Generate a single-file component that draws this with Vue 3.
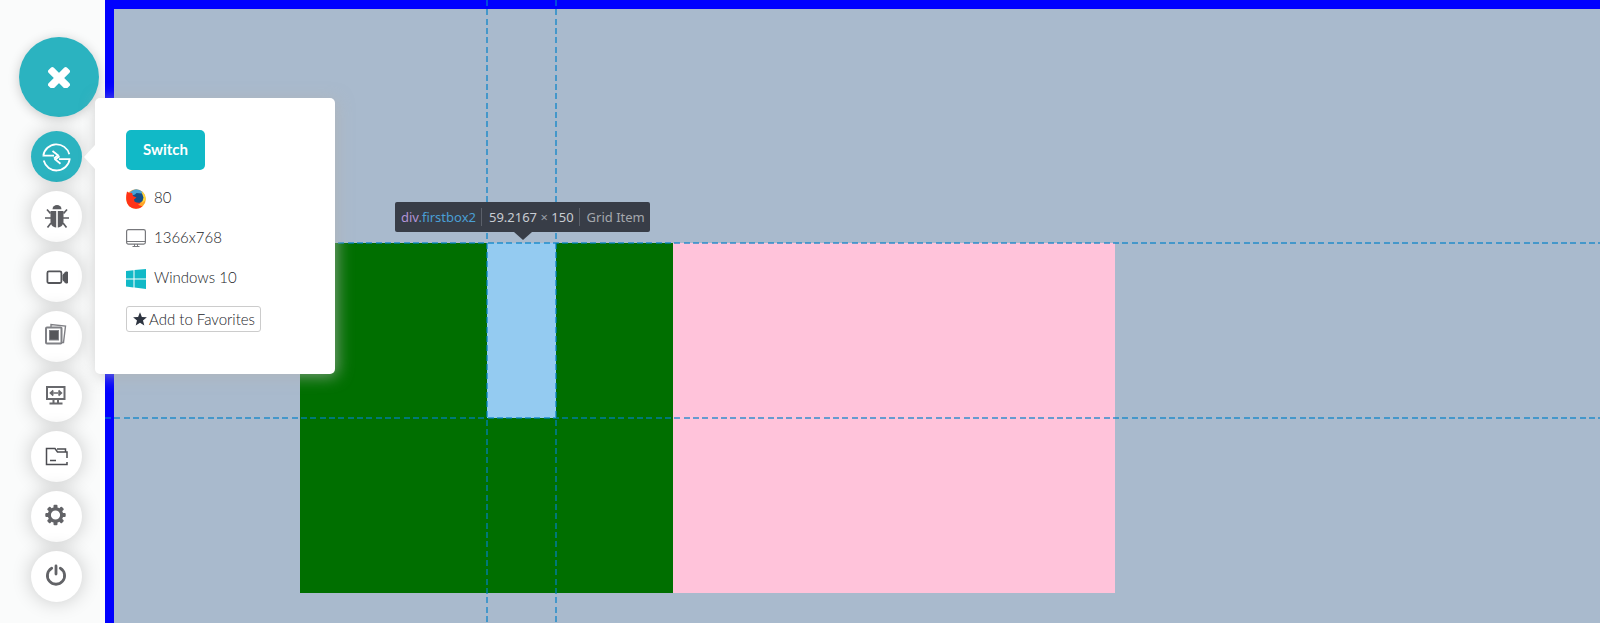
<script setup>
const tools = [
  { id: 'switch', label: 'Switch browser' },
  { id: 'bug', label: 'Report a bug' },
  { id: 'video', label: 'Record video' },
  { id: 'gallery', label: 'Gallery' },
  { id: 'resolution', label: 'Change resolution' },
  { id: 'files', label: 'Files' },
  { id: 'settings', label: 'Settings' },
  { id: 'power', label: 'End session' },
]
const teeth = [0, 45, 90, 135, 180, 225, 270, 315]
</script>

<template>
  <div class="session">
    <aside class="sidebar">
      <button class="close" aria-label="Close toolbar">
        <svg viewBox="0 0 22 22" width="22" height="22">
          <g fill="#fff" transform="translate(11 12)">
            <rect x="-13" y="-3.600" width="26" height="7.200" rx="1.800" transform="rotate(45)" />
            <rect x="-13" y="-3.600" width="26" height="7.200" rx="1.800" transform="rotate(-45)" />
          </g>
        </svg>
      </button>
      <nav class="tools" aria-label="Session tools">
        <button
          v-for="tool in tools"
          :key="tool.id"
          class="tool"
          :class="{ active: tool.id === 'switch' }"
          :aria-label="tool.label"
        >
          <svg v-if="tool.id === 'switch'" viewBox="0 0 30 30" width="30" height="30" fill="none" stroke="#fff" stroke-width="1.800">
            <path d="M.5 13.600H12M1.300 13.600A13.300 13.300 0 0 1 27.300 12.200" />
            <path d="M28.500 17.200H17M27.700 17.200A13.300 13.300 0 0 1 1.700 18.600" />
            <path d="M10.500 9 16 13.300 12 16.500" />
            <path d="M18.500 21.800 13.300 17.500 17.500 14.300" />
          </svg>
          <svg v-else-if="tool.id === 'bug'" viewBox="0 0 24 24" width="24" height="24" fill="#5c5d61">
            <path d="M7.500 4.200a4.500 4.200 0 0 1 9 0z" />
            <path d="M5.500 6H11v16.500C7.500 22 5.500 19.500 5.500 16zM13 6h5.500v10c0 3.500-2 6-5.500 6.500z" />
            <path d="M5.500 8.500 2 4.500M18.500 8.500 22 4.500M6 13H0M18 13h6M6 18 2.500 22.500M18 18 21.500 22.500" stroke="#5c5d61" stroke-width="1.700" />
            <path d="M12 6v16.500" stroke="#bbb" stroke-width="1" />
          </svg>
          <svg v-else-if="tool.id === 'video'" viewBox="0 0 24 24" width="24" height="24" fill="none" stroke="#55565a">
            <rect x="2.400" y="6.400" width="14" height="11.600" rx="1.500" stroke-width="1.800" />
            <path d="M18 10 20.500 7h2v11h-2L18 15z" fill="#55565a" />
          </svg>
          <svg v-else-if="tool.id === 'gallery'" class="raised" viewBox="0 0 24 24" width="24" height="24" fill="none" stroke="#808186">
            <path d="M6 4V1.500L20.500 3 18.500 19.500H17M16.500 4.500l-1.500 14" stroke-width="1.400" />
            <rect x="1" y="4.500" width="15.500" height="16" rx="1" fill="#fff" stroke-width="2" />
            <rect x="4.500" y="7.500" width="9" height="9.500" fill="#55565a" />
          </svg>
          <svg v-else-if="tool.id === 'resolution'" class="raised" viewBox="0 0 24 24" width="24" height="24" fill="none" stroke="#68696d">
            <rect x="2" y="4" width="17.500" height="12" stroke-width="2" />
            <path d="M6 10h10M8.300 7.500 5.500 10l2.800 2.500M13.500 7.500 16.300 10l-2.800 2.500" stroke-width="1.700" />
            <path d="M8.500 17v3M13 17v3M4.500 20.500h13" stroke-width="2" />
          </svg>
          <svg v-else-if="tool.id === 'files'" viewBox="0 0 24 24" width="24" height="24" fill="none" stroke="#4c4d52" stroke-width="1.500">
            <path d="M22 17v2.500H1.500V3.500H10L12.500 7H22v6" />
            <path d="M12 4h8.500v3M5 15.500h6" />
          </svg>
          <svg v-else-if="tool.id === 'settings'" class="raised" viewBox="0 0 24 24" width="24" height="24">
            <g fill="#626367">
              <rect v-for="a in teeth" :key="a" x="8.500" y="1.800" width="4" height="5" rx="1" :transform="`rotate(${a} 10.500 12)`" />
            </g>
            <circle cx="10.500" cy="12" r="6.200" fill="none" stroke="#626367" stroke-width="3.200" />
          </svg>
          <svg v-else class="raised" viewBox="0 0 24 24" width="24" height="24" fill="none" stroke="#626367" stroke-width="2.800" stroke-linecap="round">
            <path d="M6.700 5.200a8.600 8.600 0 1 0 8.600 0M11 3v8" />
          </svg>
        </button>
      </nav>

      <section class="popup" aria-label="Current environment">
        <button class="switch">Switch</button>
        <ul class="facts">
          <li>
            <svg viewBox="0 0 20 20" width="20" height="20">
              <circle cx="10" cy="10" r="9.800" fill="#ffa42a" />
              <path d="M3.500 4Q10-3 16.500 3L17 10H5z" fill="#4aa3d8" />
              <path d="M15.500 2.500Q20 6 19.700 11L16 14q1.500-6-.5-11.500" fill="#ffd93b" />
              <path d="M6 6.500 9 5.500 10.500 4 16 4.500 17.500 8.500 16.500 12 12.500 15 7 14 6 11z" fill="#174f86" />
              <path d="M1 2.500 3.500 4 6 3.700 7 7 10.500 8.500 8 10.500 8.500 12.500q3 2 6 1-1 2-2.500 2.300l4.500 1.700Q10 22 3.500 17.500-1.500 12 1 2.500z" fill="#ff3318" />
            </svg>
            <span>80</span>
          </li>
          <li>
            <svg viewBox="0 0 20 20" width="20" height="20" fill="none" stroke="#77787c">
              <rect x=".6" y=".600" width="18.800" height="14.500" rx="1.800" stroke-width="1.200" />
              <path d="M1 12.500h18M8.500 15v2.500M11.500 15v2.500M6.500 17.500h7" />
            </svg>
            <span>1366x768</span>
          </li>
          <li>
            <svg viewBox="0 0 20 20" width="20" height="20" fill="#11b9c7">
              <path d="M0 2 7.500 1.200V9.500H0zM8.500 1 20 0V9.500H8.500zM0 10.500H7.500v8L0 17.500zM8.500 10.500H20V20L8.500 18.600z" />
            </svg>
            <span>Windows 10</span>
          </li>
        </ul>
        <button class="favorite">
          <svg viewBox="0 0 14 14" width="14" height="14">
            <path d="M7 .3 8.900 5l5 .3-3.900 3.200 1.300 4.900L7 10.700l-4.300 2.700L4 8.500.1 5.300l5-.3z" fill="#2d3440" />
          </svg>
          Add to Favorites
        </button>
      </section>
    </aside>

    <main class="page">
      <div class="boxes">
        <div class="box green"><div class="highlight"></div></div>
        <div class="box pink"></div>
      </div>
      <i class="guide column start"></i>
      <i class="guide column end"></i>
      <i class="guide row start"></i>
      <i class="guide row end"></i>
      <div class="inspector" role="tooltip">
        <span class="selector"><b>div</b>.firstbox2</span>
        <span class="size">59.2167 <em>×</em> 150</span>
        <span class="kind">Grid Item</span>
      </div>
    </main>
  </div>
</template>

<style>
body {
  margin: 0;
}
</style>

<style scoped>
.session {
  display: flex;
  min-height: 100vh;
  font-family: Lato, "Liberation Sans", sans-serif;
  background: #fafbfb;
}
.session * {
  box-sizing: border-box;
}
button {
  font: inherit;
  border: 0;
  padding: 0;
  cursor: pointer;
}
svg {
  display: block;
  flex: none;
}
.sidebar {
  position: relative;
  z-index: 2;
  flex: none;
  width: 105px;
  padding: 37px 0 0 19px;
}
.close,
.tool {
  display: flex;
  align-items: center;
  justify-content: center;
  border-radius: 50%;
}
.close {
  width: 80px;
  height: 80px;
  background: #2bb3c0;
  box-shadow: 0 2px 12px rgba(0, 0, 0, 0.2);
}
.tools {
  display: flex;
  flex-direction: column;
  gap: 9px;
  width: 51px;
  margin: 14px 0 0 12px;
}
.tool {
  width: 51px;
  height: 51px;
  background: #fff;
  box-shadow: 0 0 20px rgba(0, 0, 0, 0.2);
}
.tool.active {
  background: #2bb3c0;
}
.raised {
  margin-bottom: 4px;
}
.popup {
  position: absolute;
  top: 98px;
  left: 95px;
  width: 240px;
  padding: 32px 31px 42px;
  border-radius: 5px;
  background: #fff;
  box-shadow: 2px 2px 16px rgba(180, 180, 180, 0.7);
}
.popup::before {
  content: "";
  position: absolute;
  top: 47px;
  left: -11px;
  border: solid transparent;
  border-width: 12px 11px 12px 0;
  border-right-color: #fff;
}
.switch {
  display: block;
  width: 79px;
  height: 40px;
  padding-bottom: 2px;
  border-radius: 5px;
  background: #11b9c7;
  color: #fff;
  font-size: 15px;
  font-weight: 700;
}
.facts {
  margin: 8px 0;
  padding: 0;
  list-style: none;
  font-size: 15px;
  font-weight: 300;
  color: #222328;
}
.facts li {
  display: flex;
  align-items: center;
  gap: 8px;
  height: 40px;
  padding-bottom: 2px;
}
.facts span {
  line-height: 20px;
}
.facts svg {
  margin-top: 4px;
}
.favorite {
  display: flex;
  align-items: center;
  gap: 2px;
  height: 26px;
  padding: 0 5px 0 6px;
  border: 1px solid #ccc;
  border-radius: 3px;
  background: #fff;
  color: #222328;
  font-size: 15px;
  font-weight: 300;
  white-space: nowrap;
}
.page {
  position: relative;
  flex: 1;
  min-width: 0;
  border: solid #0000ff;
  border-width: 9px 0 0 9px;
  padding: 234px 0 0 186px;
  background: #a9bacd;
}
.boxes {
  display: grid;
  grid-template-columns: 373px 442px;
  grid-auto-rows: 350px;
}
.green {
  padding-left: 187px;
  background: #006f00;
}
.pink {
  background: #ffc3da;
}
.highlight {
  width: 69px;
  height: 175px;
  background: #94cbf1;
}
.guide {
  position: absolute;
  opacity: 0.6;
}
.column {
  top: -9px;
  bottom: 0;
  width: 2px;
  background: repeating-linear-gradient(#0080c8 0 6px, transparent 6px 9px, #0080c8 9px 15px, transparent 15px 19px, #0080c8 19px 25px, transparent 25px 28px);
}
.row {
  left: -9px;
  right: 0;
  height: 2px;
  background: repeating-linear-gradient(90deg, #0080c8 0 6px, transparent 6px 9px, #0080c8 9px 15px, transparent 15px 19px, #0080c8 19px 25px, transparent 25px 28px);
}
.column.start {
  left: 372px;
}
.column.end {
  left: 441px;
}
.row.start {
  top: 233px;
}
.row.end {
  top: 408px;
}
.inspector {
  position: absolute;
  top: 193px;
  left: 281px;
  display: flex;
  align-items: center;
  height: 30px;
  padding: 0 5px 0 6px;
  border-radius: 2px;
  background: #383d47;
  color: #c8ccd2;
  font: 13px "Noto Sans", "Open Sans", sans-serif;
  white-space: nowrap;
}
.inspector::after {
  content: "";
  position: absolute;
  top: 30px;
  left: 119px;
  border: solid transparent;
  border-width: 8px 9px 0;
  border-top-color: #383d47;
}
.inspector span {
  line-height: 18px;
}
.inspector span + span {
  margin-left: 5px;
  padding-left: 7px;
  border-left: 1px solid #5b606a;
}
.selector {
  color: #4a9fd4;
}
.selector b {
  color: #b394d6;
  font-weight: 400;
}
.size em {
  font-style: normal;
  color: #9a9ea6;
}
.inspector .kind {
  color: #a5a8ad;
}
</style>
